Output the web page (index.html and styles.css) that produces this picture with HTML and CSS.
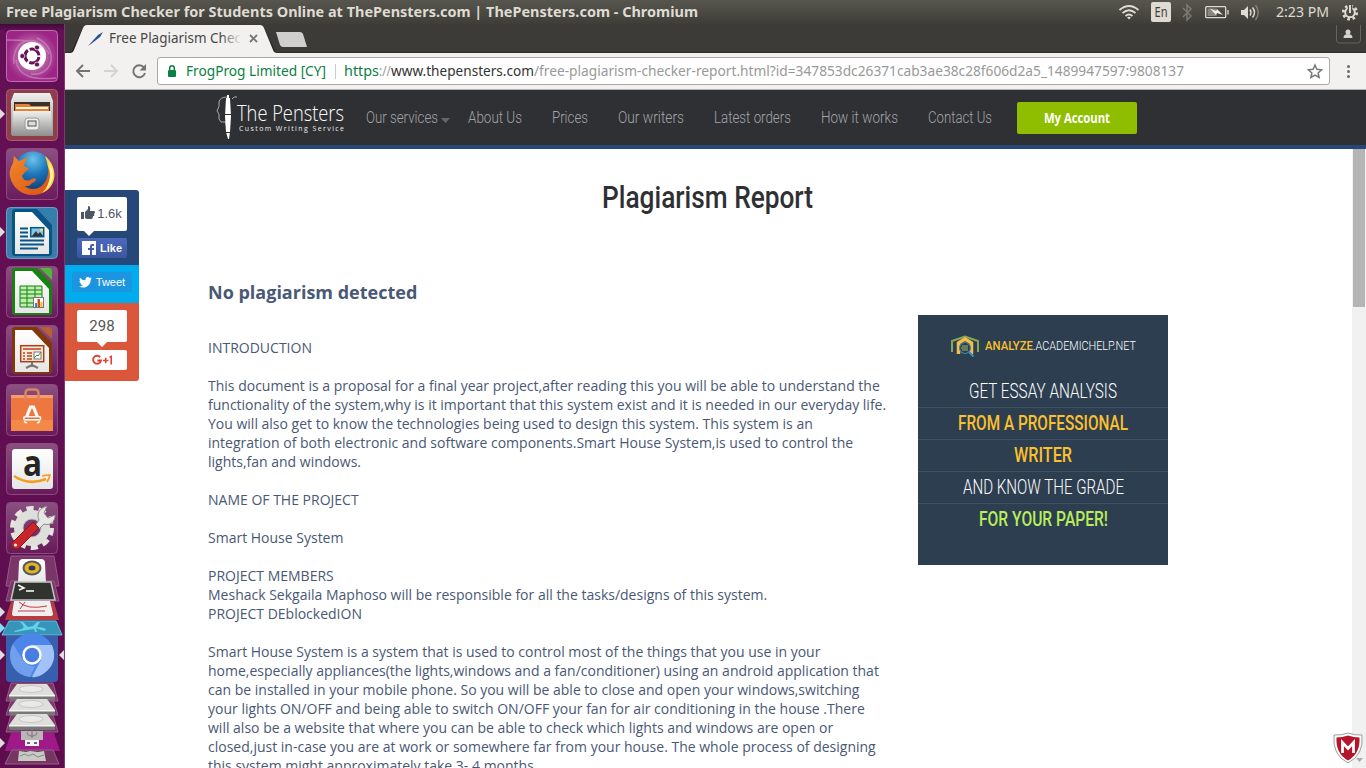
FILE: index.html
```html
<!DOCTYPE html>
<html lang="en">
<head>
<meta charset="utf-8">
<title>Free Plagiarism Checker for Students Online at ThePensters.com</title>
<link rel="stylesheet" href="styles.css">
</head>
<body>
<header class="panel">
  <svg class="label panel-title" width="692" height="24"><text x="0" y="17" textLength="692" lengthAdjust="spacingAndGlyphs">Free Plagiarism Checker for Students Online at ThePensters.com | ThePensters.com - Chromium</text></svg>
  <svg class="tray" width="256" height="24" viewBox="1110 0 256 24">
    <g fill="none" stroke="#dfdbd2" stroke-width="1.800">
      <path d="M1119.500 10q9.500-8 19 0M1122.500 13q6.500-5.500 13 0M1125.500 16q3.500-3 7 0"/>
    </g>
    <path fill="#dfdbd2" d="M1127 17.500q2-1.500 4 0l-2 2z"/>
    <rect x="1151" y="2" width="20" height="20" rx="2" fill="#dfdbd2"/>
    <text class="lang" x="1154.500" y="17" textLength="13" lengthAdjust="spacingAndGlyphs">En</text>
    <path d="M1183 8l8 8-4 4V5l4 4-8 8" fill="none" stroke="#7c7a72" stroke-width="1.500"/>
    <g fill="none" stroke="#dfdbd2" stroke-width="1.300"><rect x="1205.700" y="6.700" width="20" height="11" rx="1"/><path d="M1228 10v4.500"/></g>
    <rect x="1207.500" y="8.500" width="9" height="7.500" fill="#88867e"/>
    <path fill="#f2eee5" d="M1210 8.500l6 2.500 1-2 6 6-6-2-1 2z"/>
    <path fill="#dfdbd2" d="M1241 10h3l4-4v13l-4-4h-3z"/>
    <path d="M1250 9.500q2 3 0 6M1252.500 7.500q4 5 0 10" fill="none" stroke="#dfdbd2" stroke-width="1.500"/>
    <path d="M1255.500 5q5.500 7.500 0 15" fill="none" stroke="#858279" stroke-width="1.500"/>
    <text class="clock" x="1276" y="17" textLength="53" lengthAdjust="spacingAndGlyphs">2:23 PM</text>
    <circle cx="1350" cy="12.500" r="6.700" fill="none" stroke="#dfdbd2" stroke-width="2.800" stroke-dasharray="2.600 2.662"/>
    <circle cx="1350" cy="12.500" r="4.800" fill="none" stroke="#dfdbd2" stroke-width="2"/>
    <path d="M1350 4v9" stroke="#4a4943" stroke-width="4.500"/><path d="M1350 5v8" stroke="#dfdbd2" stroke-width="2"/>
  </svg>
</header>
<div class="desktop">
  <nav class="launcher">
    <svg class="tile" viewBox="0 0 52 52">
      <defs>
        <linearGradient id="metal" x2="0" y2="1"><stop stop-color="#f0f0ee"/><stop offset="1" stop-color="#8e8e8c"/></linearGradient>
        <linearGradient id="paper" x2="0" y2="1"><stop stop-color="#fff"/><stop offset="1" stop-color="#e5e5e5"/></linearGradient>
        <linearGradient id="gloss" x2="0" y2="1"><stop stop-color="#fff" stop-opacity=".27"/><stop offset="1" stop-color="#fff" stop-opacity=".05"/></linearGradient>
        <radialGradient id="plum"><stop stop-color="#d6a5cb"/><stop offset="1" stop-color="#9c2585"/></radialGradient>
      </defs>
      <rect x=".5" y=".5" width="51" height="51" rx="4" fill="url(#plum)" stroke="#bd6fae"/>
      <g fill="none" stroke="#cf88c0" stroke-width="1.500" opacity=".7"><path d="M8 34C5 8 32 2 43 24M25 44c22 3 29-25 6-36M1 10c18 0 24 0 34 7M50 48C30 50 12 48 10 30"/></g>
      <circle cx="26" cy="26" r="14" fill="#fff"/>
      <circle cx="26" cy="26" r="7" fill="none" stroke="#6a1057" stroke-width="3" stroke-dasharray="12.700 2" stroke-dashoffset="-1"/>
      <g fill="#6a1057" stroke="#fff" stroke-width=".7"><circle cx="16.300" cy="26" r="2.500"/><circle cx="31" cy="17.500" r="2.500"/><circle cx="31" cy="34.500" r="2.500"/></g>
    </svg>
    <svg class="tile" viewBox="0 0 52 52">
      <rect x=".5" y=".5" width="51" height="51" rx="4" fill="#8d3d4b" stroke="#a6606d"/>
      <path d="M8 4h36l3 8v34H5V12z" fill="url(#metal)"/><path d="M8 13h36v9H8z" fill="#37302d"/>
      <path d="M9 15h14l2 2h18v6H9z" fill="#e98031"/><path d="M10 18h32v2H10z" fill="#fff4de"/><path d="M7 22h38l2 25H6z" fill="url(#metal)"/>
      <rect x="19" y="29" width="14" height="12" rx="3" fill="#eee" stroke="#999"/><rect x="22" y="32" width="8" height="5" fill="#ddd" stroke="#555"/>
      <path d="M-6 20l5 5-5 5z" fill="#ddd"/>
    </svg>
    <svg class="tile" viewBox="0 0 52 52">
      <defs><radialGradient id="globe" cx=".5" cy=".2" r=".8"><stop stop-color="#6cc3ec"/><stop offset=".5" stop-color="#1b74b8"/><stop offset="1" stop-color="#0d3f7c"/></radialGradient><linearGradient id="fur" x2="1" y2="1"><stop stop-color="#f0892c"/><stop offset="1" stop-color="#d94f12"/></linearGradient></defs>
      <rect x=".5" y=".5" width="51" height="51" rx="4" fill="url(#gloss)" stroke="#8c4b7f"/>
      <circle cx="27" cy="23" r="19.500" fill="url(#globe)"/>
      <path d="M39 8c14 12 12 32-5 38-14 4-27-4-30-17-1-6 1-10 3-14l1-7 5 5q5-2 9-4c-2 4-4 6-4 9l5 3-4 3-3 4q2 6 8 4 4-3 6-1 0 3-4 4-3 4-8 3c10 7 22 1 24-12 1-7-1-13-3-18z" fill="url(#fur)"/>
      <path d="M39 8c14 12 12 31-3 37 8-8 10-17 6-26q-1-7-3-11z" fill="#fbd74d"/><path d="M43 14c6 10 5 20-3 27 5-10 5-17 3-27z" fill="#fff6a4"/>
    </svg>
    <svg class="tile" viewBox="0 0 52 52">
      <rect x=".5" y=".5" width="51" height="51" rx="4" fill="#3c7cab" stroke="#6d9fc2"/>
      <path d="M9 2h22l15 16v28q0 3-3 3H9q-3 0-3-3V5q0-3 3-3z" fill="#075587"/><path d="M34 2h9q3 0 3 3v9z" fill="#2b83ae"/>
      <path d="M9 5h17l17 18v24H9z" fill="url(#paper)"/><path d="M14 21.500h8M14 25.500h8M14 29.500h8M14 33.500h24M14 37.500h24M14 41.500h18" stroke="#075587" stroke-width="2"/>
      <rect x="24.700" y="20.700" width="13" height="9" fill="#86c7e9" stroke="#075587" stroke-width="1.500"/><path d="M26 29l4-5 2 3 2-2 3 4z" fill="#333"/><circle cx="35.500" cy="23" r="1.500" fill="#ffe147"/>
      <path d="M-6 20l5 5-5 5z" fill="#ddd"/>
    </svg>
    <svg class="tile" viewBox="0 0 52 52">
      <rect x=".5" y=".5" width="51" height="51" rx="4" fill="url(#gloss)" stroke="#8c4b7f"/>
      <path d="M9 2h22l15 16v28q0 3-3 3H9q-3 0-3-3V5q0-3 3-3z" fill="#178112"/><path d="M34 2h9q3 0 3 3v9z" fill="#4db939"/>
      <path d="M9 5h17l17 18v24H9z" fill="url(#paper)"/><path d="M14 20h22v21H14z" fill="#bcefad"/><path d="M14 20h22v21H14zM14 24h22M14 28h22M14 32h22M14 37h22M21 20v21M29 20v21" fill="none" stroke="#178112"/>
      <rect x="27.500" y="31.500" width="10" height="10" fill="#fff" stroke="#777"/><path d="M29 37h2v4h-2z" fill="#318bd1"/><path d="M31.500 33h2.500v8h-2.500z" fill="#d74d20"/><path d="M34.500 36h2v5h-2z" fill="#f7b900"/>
    </svg>
    <svg class="tile" viewBox="0 0 52 52">
      <rect x=".5" y=".5" width="51" height="51" rx="4" fill="url(#gloss)" stroke="#8c4b7f"/>
      <path d="M9 2h22l15 16v28q0 3-3 3H9q-3 0-3-3V5q0-3 3-3z" fill="#83380c"/><path d="M34 2h9q3 0 3 3v9z" fill="#b86032"/>
      <path d="M9 5h17l17 18v24H9z" fill="url(#paper)"/><path d="M26 37v5m0-2l-6 3m6-3l6 3" stroke="#777" stroke-width="2"/><rect x="14.700" y="20.700" width="23" height="16" fill="#fae7de" stroke="#a94115" stroke-width="1.500"/>
      <path d="M17 24h18M17 28h2M17 31h2M17 34h2M21 28h5M21 31h5M21 34h5" stroke="#bd4618" stroke-width="1.700"/><rect x="28" y="27" width="7" height="7" fill="#fff" stroke="#777"/><path d="M28 33l3-3 1 1 3-4" stroke="#349835" fill="none"/>
    </svg>
    <svg class="tile" viewBox="0 0 52 52">
      <rect x=".5" y=".5" width="51" height="51" rx="4" fill="url(#gloss)" stroke="#8c4b7f"/>
      <path d="M5 11h42v36H5z" fill="#ee7740"/><path d="M5 36h42v11H5z" fill="#f38849"/><path d="M5 11h42v3H5z" fill="#f69b6a"/><path d="M19.500 17V9q0-3.500 4-3.500h5q4 0 4 3.500v8" fill="none" stroke="#d98562" stroke-width="2.500"/>
      <path d="M20.500 33l4-10h3l4 10M19 39l.8-1.500M33 39l-.8-1.500" fill="none" stroke="#fff" stroke-width="3.200"/><rect x="17.700" y="32.700" width="17" height="3" rx="1.500" fill="#ee6b30" stroke="#fff" stroke-width="1.500"/>
    </svg>
    <svg class="tile" viewBox="0 0 52 52">
      <rect x=".5" y=".5" width="51" height="51" rx="4" fill="url(#gloss)" stroke="#8c4b7f"/><rect x="6" y="6" width="41" height="40" rx="3" fill="url(#paper)"/>
      <text class="amazon-a" x="17" y="33" textLength="19" lengthAdjust="spacingAndGlyphs">a</text><path d="M8 33q15 10 32 3" fill="none" stroke="#f79b1d" stroke-width="2.500"/><path d="M36 33q4-1 8-1-1 4-3 7" fill="none" stroke="#f79b1d" stroke-width="1.700"/>
    </svg>
    <svg class="tile" viewBox="0 0 52 52">
      <rect x=".5" y=".5" width="51" height="51" rx="4" fill="url(#gloss)" stroke="#8c4b7f"/>
      <circle cx="26" cy="26" r="19" fill="none" stroke="#e4e4e1" stroke-width="6" stroke-dasharray="7 4.940"/><circle cx="26" cy="26" r="13.500" fill="none" stroke="#dededb" stroke-width="9"/><circle cx="26" cy="26" r="9" fill="none" stroke="#bbb" stroke-width="1"/>
      <path d="M29 24l4-6c-3-7 1-12 8-14l-3 7 4 5 7-3c0 7-5 11-11 9l-5 5z" fill="#e7e7e5" stroke="#8b8b88"/><path d="M27 20l6 6-21 21q-5 1-7-5z" fill="#c9262b" stroke="#8f1117"/><circle cx="9.500" cy="43" r="1.500" fill="#fff"/>
    </svg>
    <svg class="stack" width="65" height="218" viewBox="0 550 65 218">
      <g fill="#7a3569" stroke="#96588a"><path d="M11 556h43l5 30H6z"/><path d="M11 581h43l5 20H6z"/></g>
      <path d="M19 563q0-4 4-4h18q4 0 4 4l1 20H18z" fill="url(#paper)"/><ellipse cx="32" cy="568" rx="8.500" ry="6.500" fill="#e2b330" stroke="#5b5a50" stroke-width="2"/><ellipse cx="32" cy="568" rx="3.500" ry="2.500" fill="#383b42"/>
      <path d="M11 602h43l5 18H5z" fill="#b63c44"/><path d="M14 601h36l3 13q0 2-3 2H15q-3 0-3-2z" fill="#efefef"/><path d="M19 602q8 8 28 4M25 602l-5 7M18 611h27" fill="none" stroke="#cc3940"/>
      <path d="M15 582h36l4 18H11z" fill="#31332f" stroke="#c4c4c1" stroke-width="1.500"/><path d="M18 585l6 3-5 2M26 591h8" fill="none" stroke="#fff" stroke-width="1.500"/>
      <path d="M9 621h47l6 14H2z" fill="#3696b9" stroke="#50c6e5"/><path d="M20 622q6 5 2 7l-8 2 1 1 12-2 7-1 1 3h2l-1-4 5 2q5 2 5-1-3-2-9-2l3-5h-3l-4 4-5 1-5-5z" fill="#69d0ec"/>
      <path d="M6 636h52v42q0 4-4 4H10q-4 0-4-4z" fill="#385fae"/><circle cx="32" cy="655" r="22" fill="#4c86e8"/><path d="M32 645h20q7 18-9 29-5 4-11 3l9-17q2-9-9-15z" fill="#a3c2f8"/><path d="M13 644l10 16q5 7 12 6l-5 11C12 675 6 657 13 644z" fill="#719fed"/><circle cx="32" cy="655" r="8.500" fill="#487ee0" stroke="#fff" stroke-width="2.500"/>
      <g fill="#793967" stroke="#94618a"><path d="M11 683h42l5 18H6zM11 700h42l5 15H6zM11 715h42l5 17H6z"/></g>
      <g id="drive"><path d="M17 684h30l8 11H9z" fill="#dededb"/><path d="M9 695h46v5H13q-4 0-4-2z" fill="#777"/><path d="M9 695h46v1.500H9z" fill="#f4f4f2"/><ellipse cx="31" cy="689" rx="12" ry="3.500" fill="#e9e9e7" stroke="#c8c8c6"/></g><use href="#drive" y="15"/><use href="#drive" y="30"/>
      <path d="M11 733h43l6 18H5z" fill="#a01989"/><path d="M21 731h22v9H21z" fill="#bab6b7"/><path d="M32 730v8m-5-6q0 4 5 4m5-4q0 4-5 4" fill="none" stroke="#777"/><path d="M25 740h14v6H25z" fill="#f2f2f2"/><path d="M27 743h3m4 0h3" stroke="#666" stroke-width="2"/>
      <path d="M12 750h41l6 14H5z" fill="#75375f" stroke="#94618a"/><path d="M19 751l7 1 4-1 8 1 6-1 2 10H18z" fill="#c9c9c6"/><path d="M20 756l5-2 3 2 5-2 5 3 6-2" fill="none" stroke="#888"/>
      <g fill="#ddd"><path d="M0 607l5 5-5 5zM0 650l5 5-5 5zM0 738l5 5-5 5zM64 650l-5 5 5 5z"/><path d="M0 623l5 5-5 5z" fill="#83def4"/></g>
    </svg>
  </nav>
  <main class="browser">
    <svg class="tabs" width="1301" height="29" viewBox="65 24 1301 29">
      <path d="M65 52.500h6l13-27h179l13 27h1090V53H65z" fill="#282723"/><path d="M71 53q2 0 3-3l9-22q1-3 4-3h173q3 0 4 3l9 22q1 3 4 3z" fill="#f2f1f0"/>
      <path d="M88 46l10-11 5-3-3 5-9 7z" fill="#28528a"/>
      <defs><linearGradient id="fade" gradientUnits="userSpaceOnUse" x1="221" x2="242"><stop stop-color="#464646"/><stop offset="1" stop-color="#464646" stop-opacity="0"/></linearGradient></defs>
      <text class="tab-title" fill="url(#fade)" x="109" y="43" textLength="132" lengthAdjust="spacingAndGlyphs">Free Plagiarism Chec</text>
      <path d="M250 35l7 7m0-7l-7 7" stroke="#777" stroke-width="1.800"/><path d="M276 32h24q2 0 3 2l4 13h-24q-2 0-3-2z" fill="#d0cfcd"/>
      <path d="M1336.500 25v15q0 3 3 3h18q3 0 3-3V25" fill="none" stroke="#66645f"/><circle cx="1348" cy="32" r="2.500" fill="#d5d3ce"/><path d="M1343.500 38q0-4 4.500-4t4.500 4z" fill="#d5d3ce"/>
    </svg>
    <div class="toolbar">
      <svg class="history" width="92" height="36" viewBox="65 53 92 36"><g fill="none" stroke-width="1.900"><path stroke="#747372" d="M90 71H77.500M83 65l-6 6 6 6"/><path stroke="#d4d3d1" d="M104 71h12.500M111 65l6 6-6 6"/><path stroke="#747372" d="M144 67.500A6 6 0 1 0 145 73"/></g><path fill="#747372" d="M146 64v6.500h-6.500z"/></svg>
      <div class="address">
        <svg class="label" width="1171" height="26" viewBox="158 58 1171 26">
          <rect x="168" y="70" width="8" height="7" rx="1" fill="#0b8043"/><path d="M169.700 70v-2q0-2.300 2.300-2.300t2.300 2.300v2" fill="none" stroke="#0b8043" stroke-width="1.500"/>
          <text x="186" y="76" fill="#0b8043" textLength="140" lengthAdjust="spacingAndGlyphs">FrogProg Limited [CY]</text><path d="M335.500 64v15" stroke="#ccc"/>
          <text x="344" y="76" fill="#0b8043" textLength="35" lengthAdjust="spacingAndGlyphs">https</text><text x="379" y="76" fill="#999" textLength="12" lengthAdjust="spacingAndGlyphs">://</text><text x="391" y="76" fill="#333" textLength="143" lengthAdjust="spacingAndGlyphs">www.thepensters.com</text><text x="534" y="76" fill="#999" textLength="650" lengthAdjust="spacingAndGlyphs">/free-plagiarism-checker-report.html?id=347853dc26371cab3ae38c28f606d2a5_1489947597:9808137</text>
          <path d="M1315 65l1.900 4.300 4.700.5-3.500 3.100 1 4.600-4.100-2.400-4.100 2.400 1-4.600-3.500-3.100 4.700-.5z" fill="none" stroke="#777" stroke-width="1.500"/>
        </svg>
      </div>
      <div class="menu"><i></i><i></i><i></i></div>
    </div>
    <header class="site-header">
      <svg class="logo" width="131" height="46" viewBox="214 94 131 46">
        <path d="M226 97q-7 0-8 5 1 4-2 9l2 3v5l2 3h5v3M231 99q2-3 5-2" transform="translate(1 0)" fill="none" stroke="#aaa" stroke-width="1"/><path d="M227 95h2v3h1l1 18-1 16-1 7h-1l-2-7-1-16 1-18h1z" fill="#fff"/><path d="M225 114.500h6M226 132.500h4" stroke="#2f3033"/>
        <text class="brand" x="237" y="121" textLength="107" lengthAdjust="spacingAndGlyphs">The Pensters</text><text class="tagline" x="239" y="131" textLength="105">Custom Writing Service</text>
      </svg>
      <nav class="site-nav">
        <svg width="83" height="20"><text y="16" textLength="72" lengthAdjust="spacingAndGlyphs">Our services</text><path d="M75 11h9l-4.500 5z" fill="#66676b"/></svg>
        <svg width="54" height="20"><text y="16" textLength="54" lengthAdjust="spacingAndGlyphs">About Us</text></svg>
        <svg width="36" height="20"><text y="16" textLength="36" lengthAdjust="spacingAndGlyphs">Prices</text></svg>
        <svg width="66" height="20"><text y="16" textLength="66" lengthAdjust="spacingAndGlyphs">Our writers</text></svg>
        <svg width="77" height="20"><text y="16" textLength="77" lengthAdjust="spacingAndGlyphs">Latest orders</text></svg>
        <svg width="77" height="20"><text y="16" textLength="77" lengthAdjust="spacingAndGlyphs">How it works</text></svg>
        <svg width="64" height="20"><text y="16" textLength="64" lengthAdjust="spacingAndGlyphs">Contact Us</text></svg>
      </nav>
      <div class="account"><svg width="66" height="20"><text y="15" textLength="66" lengthAdjust="spacingAndGlyphs">My Account</text></svg></div>
    </header>
    <div class="page">
      <aside class="social">
        <div class="fb">
          <div class="bubble tail-left"><svg width="14" height="14" viewBox="0 0 14 14"><path d="M0 6h3v7H0zM4 6l3-3V0q3 0 2 5h4q2 1 0 3 1 2-1 2 0 3-2 3H6l-2-1z" fill="#4e5665"/></svg><span>1.6k</span></div>
          <div class="like"><svg width="14" height="14" viewBox="0 0 14 14"><path d="M0 0h14v14h-4V9h2V7h-2V5h2V3h-2Q8 3 8 5v2H6v2h2v5H0z" fill="#fff"/></svg><b>Like</b></div>
        </div>
        <div class="tw"><div class="tweet"><svg width="13" height="11" viewBox="0 0 24 20"><path fill="#fff" d="M24 2.300l-2.500 2.500C22 15 11 23 0 17.500q4 .3 7-2-3.500-.3-4.500-3.500h2Q1 11 .7 7l2.200.7Q-.2 5 1.600 1 6 6 12 6C11 0 17-1.500 20 1.600L23 .4 21 3z"/></svg><span>Tweet</span></div></div>
        <div class="gp"><div class="bubble count">298</div><div class="plus"><svg width="21" height="12" viewBox="0 0 21 12"><path d="M8.200 3.200A4 4 0 1 0 9 6.500H5.300" fill="none" stroke="#dc4435" stroke-width="1.900"/><path d="M11 6.500h5.500M13.700 3.700v5.600M17.500 3.200l1.700-.7v8" fill="none" stroke="#dc4435" stroke-width="1.600"/></svg></div></div>
      </aside>
      <div class="report">
        <h1><svg width="212" height="40"><text y="30" textLength="211" lengthAdjust="spacingAndGlyphs">Plagiarism Report</text></svg></h1>
        <div class="columns">
          <article>
            <h2>No plagiarism detected</h2>
            <p>INTRODUCTION<br><br>This document is a proposal for a final year project,after reading this you will be able to understand the<br>functionality of the system,why is it important that this system exist and it is needed in our everyday life.<br>You will also get to know the technologies being used to design this system. This system is an<br>integration of both electronic and software components.Smart House System,is used to control the<br>lights,fan and windows.<br><br>NAME OF THE PROJECT<br><br>Smart House System<br><br>PROJECT MEMBERS<br>Meshack Sekgaila Maphoso will be responsible for all the tasks/designs of this system.<br>PROJECT DEblockedION<br><br>Smart House System is a system that is used to control most of the things that you use in your<br>home,especially appliances(the lights,windows and a fan/conditioner) using an android application that<br>can be installed in your mobile phone. So you will be able to close and open your windows,switching<br>your lights ON/OFF and being able to switch ON/OFF your fan for air conditioning in the house .There<br>will also be a website that where you can be able to check which lights and windows are open or<br>closed,just in-case you are at work or somewhere far from your house. The whole process of designing<br>this system might approximately take 3- 4 months.</p>
          </article>
          <aside class="ad">
            <svg class="ad-logo" width="186" height="24" viewBox="951 334 186 24">
              <path d="M952 352v-11l13-4.500 13 4.500v11" fill="none" stroke="#88a757" stroke-width="2"/><path d="M958.500 354v-11l6.500-4 6.500 4v11" fill="none" stroke="#f8bd45" stroke-width="3.500"/><circle cx="965" cy="348" r="5.500" fill="#2c3e50" stroke="#4387a8" stroke-width="1.200"/><path d="M962 346h6m-7 2h7m-6 2h6" stroke="#a2b85e"/><path d="M969 352l4.500 4.500" stroke="#3e91bf" stroke-width="2"/>
              <text class="strong" x="985" y="350" fill="#fbc02d" textLength="48" lengthAdjust="spacingAndGlyphs">ANALYZE</text><text x="1033" y="350" fill="#fff" textLength="103" lengthAdjust="spacingAndGlyphs">.ACADEMICHELP.NET</text>
            </svg>
            <div class="line"><svg width="148" height="24"><text y="20" textLength="148" lengthAdjust="spacingAndGlyphs">GET ESSAY ANALYSIS</text></svg></div>
            <div class="line gold"><svg width="170" height="24"><text y="20" textLength="170" lengthAdjust="spacingAndGlyphs">FROM A PROFESSIONAL</text></svg></div>
            <div class="line gold"><svg width="58" height="24"><text y="20" textLength="58" lengthAdjust="spacingAndGlyphs">WRITER</text></svg></div>
            <div class="line"><svg width="161" height="24"><text y="20" textLength="161" lengthAdjust="spacingAndGlyphs">AND KNOW THE GRADE</text></svg></div>
            <div class="line lime"><svg width="129" height="24"><text y="20" textLength="129" lengthAdjust="spacingAndGlyphs">FOR YOUR PAPER!</text></svg></div>
          </aside>
        </div>
      </div>
      <div class="scrollbar"><div class="thumb"></div></div>
    </div>
  </main>
</div>
<div class="corner"><svg width="36" height="38" viewBox="1330 730 36 38"><path d="M1348 733q7 2.500 14 2 2 20-14 28-16-8-14-28 7 .5 14-2z" fill="#fff" stroke="#9c9c9c"/><path d="M1348 735.500q6 2 11.500 2 1 16-11.500 23-12.500-7-11.500-23 5.500 0 11.500-2z" fill="#b4152b"/><path d="M1342.500 753v-10.500l5.500 6 5.500-6V753" fill="none" stroke="#fff" stroke-width="2.800"/><path d="M1356 758h7l-3.500 4z" fill="#aaa"/></svg></div>
</body>
</html>
```
FILE: styles.css
```css
* { box-sizing: border-box; }
body { margin: 0; width: 1366px; height: 768px; overflow: hidden; display: flex; flex-direction: column; background: #fff; font-family: "Open Sans", sans-serif; }
svg { display: block; flex: none; overflow: visible; }
.panel { height: 24px; flex: none; display: flex; justify-content: space-between; padding-left: 6px; background: linear-gradient(#57564e, #3e3d38); }
.panel-title { font: bold 13.5px "Noto Sans", sans-serif; fill: #dfdbd2; }
.tray { font-family: "Noto Sans", sans-serif; }
.lang { font-size: 14px; fill: #3c3b37; }
.clock { font-size: 13.5px; fill: #dfdbd2; }
.desktop { flex: 1; min-height: 0; display: flex; }
.launcher { width: 65px; flex: none; padding-top: 6px; overflow: hidden; display: flex; flex-direction: column; align-items: center; gap: 7px; background: linear-gradient(#43083a, #641056 7px, #5d0d4e); border-right: 1px solid #7a3b6d; }
.tile { width: 52px; height: 52px; }
.amazon-a { font: bold 35px "Open Sans", sans-serif; fill: #252525; }
.stack { margin-top: -11px; margin-right: -1px; }
.browser { flex: 1; min-width: 0; display: flex; flex-direction: column; }
.tabs { background: #3c3b37; }
.tab-title { font: 14px "Noto Sans", sans-serif; }
.toolbar { height: 37px; flex: none; display: flex; align-items: flex-start; background: #f2f1f0; border-bottom: 1px solid #b4b3b1; }
.address { margin-top: 4px; width: 1173px; height: 28px; border: 1px solid #aaa9a7; border-radius: 3px; background: #fff; }
.address text { font: 14px "Noto Sans", sans-serif; }
.menu { display: flex; flex-direction: column; gap: 2px; margin: 12px 0 0 17px; }
.menu i { width: 3px; height: 3px; border-radius: 50%; background: #6c6b6a; }
.site-header { height: 59px; flex: none; display: flex; background: #2f3033; border-bottom: 4px solid #264878; padding-left: 149px; }
.logo { margin-top: 4px; }
.brand { font: 300 22px "Open Sans", sans-serif; fill: #fff; }
.tagline { font: 7px "Open Sans", sans-serif; fill: #eee; }
.site-nav { display: flex; margin: 17px 0 0 21px; gap: 30px; width: 651px; }
.site-nav svg:first-child { margin-right: -11px; }
.site-nav text { font: 300 17px Roboto, sans-serif; fill: #a3a4a8; }
.account { width: 120px; height: 32px; margin-top: 12px; padding: 6px 27px; border-radius: 2px; background: #8fbe00; }
.account text { font: bold 14.5px "Open Sans", sans-serif; fill: #fff; }
.page { flex: 1; min-height: 0; display: flex; }
.social { width: 74px; height: 191px; flex: none; margin-top: 41px; border-radius: 0 3px 3px 0; overflow: hidden; font-family: "Liberation Sans", sans-serif; }
.fb { height: 75px; padding: 7px 12px; background: #264878; }
.bubble { position: relative; width: 50px; height: 34px; border-radius: 2px; background: #fff; display: flex; align-items: center; justify-content: center; gap: 2px; font-size: 13px; color: #4e5665; }
.bubble::after { content: ""; position: absolute; left: 20px; bottom: -5px; border: 5px solid transparent; border-top-color: #fff; border-bottom: 0; }
.tail-left::after { left: 7px; }
.bubble.tail-left { padding: 0 1px 2px 0; }
.like { width: 50px; height: 20px; margin-top: 7px; border-radius: 2px; background: linear-gradient(#4c69ba, #3b55a0); display: flex; align-items: center; justify-content: center; gap: 4px; color: #fff; font-size: 11px; }
.tw { height: 38px; padding: 7px; background: #00aced; }
.tweet { width: 60px; height: 20px; border-radius: 3px; background: #1b95e0; display: flex; align-items: center; justify-content: center; gap: 4px; color: #fff; font-size: 11px; }
.gp { height: 78px; padding: 7px 12px; background: #da573b; }
.count { height: 32px; font: 15px Roboto, sans-serif; color: #555; }
.plus { width: 50px; height: 20px; margin-top: 8px; border-radius: 2px; background: #fff; display: flex; align-items: center; justify-content: center; }
.report { width: 1000px; flex: none; margin-left: 69px; }
h1 { margin: 29px 0 0; height: 94px; display: flex; justify-content: center; }
h1 text { font: 500 31px Roboto, sans-serif; fill: #2f3033; }
.columns { display: flex; justify-content: space-between; align-items: flex-start; padding-right: 40px; height: 496px; overflow: hidden; }
article { width: 700px; color: #495875; }
h2 { margin: 8px 0 33px; font-size: 18px; line-height: 25px; }
article p { margin: 0; font-size: 14px; line-height: 19px; white-space: nowrap; }
.ad { width: 250px; height: 250px; margin-top: 43px; background: #2c3e50; }
.ad-logo { margin: 19px 0 18px 33px; font: 300 12.5px Roboto, sans-serif; }
.ad-logo .strong { font-weight: 500; }
.line { height: 32px; padding-top: 2px; display: flex; justify-content: center; border-bottom: 1px solid #405160; }
.line text { font: 300 20px Roboto, sans-serif; fill: #fff; }
.line.gold text { font-weight: 500; fill: #fbc02d; }
.line.lime { border: 0; }
.line.lime text { font-weight: 500; fill: #b9ed5c; }
.scrollbar { width: 14px; height: 100%; flex: none; margin-left: auto; padding: 0 1px; background: #f1f1f1; }
.thumb { height: 158px; background: #b5b5b5; }
.corner { position: absolute; left: 1330px; top: 730px; }
```
